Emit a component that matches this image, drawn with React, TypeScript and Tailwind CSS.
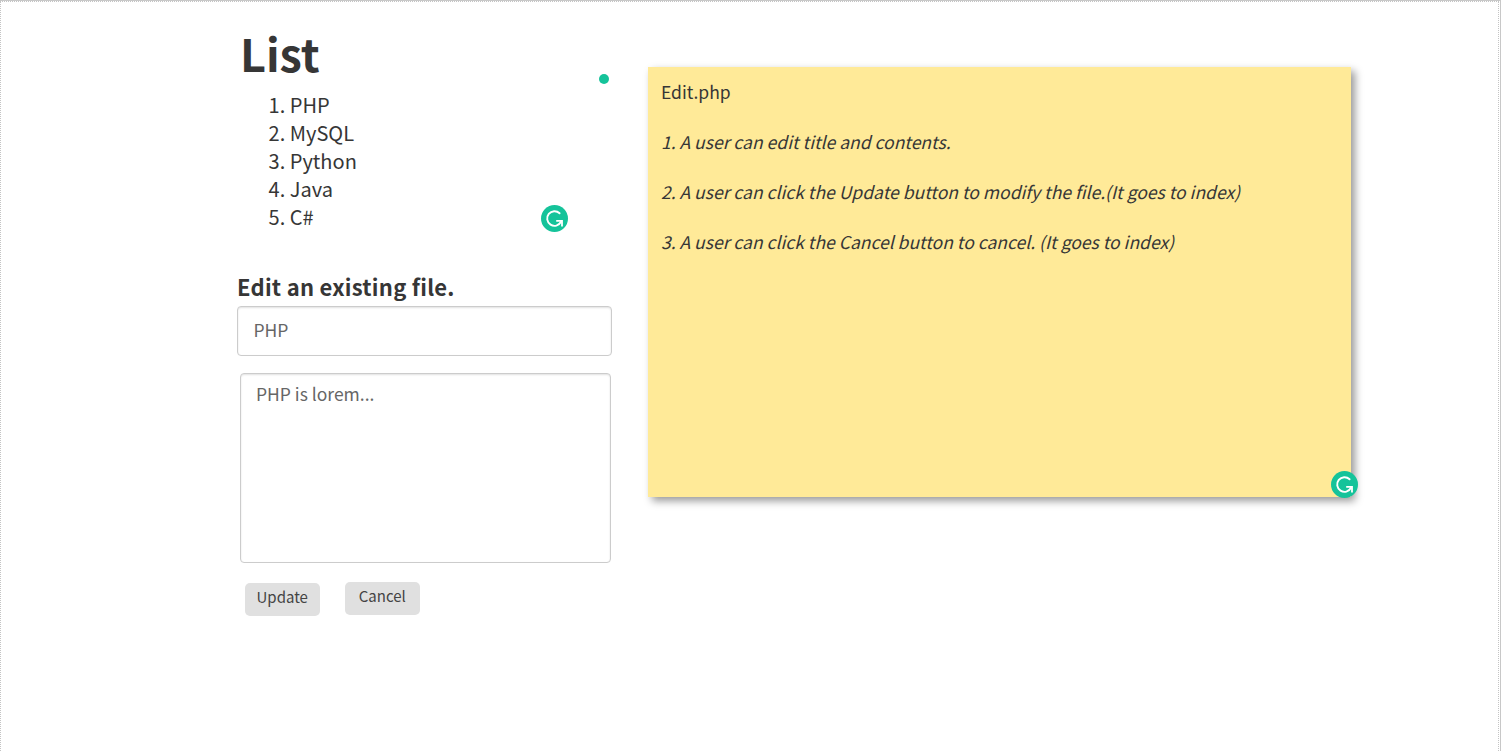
const items = ["PHP", "MySQL", "Python", "Java", "C#"];

const notes = [
  "1. A user can edit title and contents.",
  "2. A user can click the Update button to modify the file.(It goes to index)",
  "3. A user can click the Cancel button to cancel. (It goes to index)",
];

function Badge({ className }: { className: string }) {
  return (
    <svg className={className} viewBox="0 0 27 27" fill="none" aria-hidden="true">
      <circle cx="13.5" cy="13.5" r="13.5" fill="#15c39a" />
      <path d="M18.6 8.3A7.3 7.3 0 1 0 20 16.8" stroke="#fff" strokeWidth="1.9" strokeLinecap="round" />
      <path d="M15.2 15.9H21V21.4" stroke="#fff" strokeWidth="1.8" />
    </svg>
  );
}

export default function App() {
  return (
    <div className="relative h-[751px] w-[1501px] overflow-hidden bg-white font-['Noto_Sans_CJK_SC','Noto_Sans',sans-serif] text-[#363636]">
      <div className="pointer-events-none absolute inset-x-0 top-0 h-px bg-[#c8c8c8]" />
      <div className="pointer-events-none absolute inset-x-0 top-px border-t border-dotted border-[#c4c4c4]" />
      <div className="pointer-events-none absolute inset-y-0 left-0 border-l border-dotted border-[#c4c4c4]" />
      <div className="pointer-events-none absolute inset-y-0 right-[2px] border-r border-dotted border-[#c4c4c4]" />
      <div className="pointer-events-none absolute inset-y-0 right-0 w-px bg-[#c8c8c8]" />
      <div className="flex items-start pl-[237px]">
        <main className="relative w-[375px] pt-[26px]">
          <h1 className="pl-[3px] text-[45px] leading-[54px] font-bold tracking-[-0.1px]">List</h1>
          <ol className="mt-[11px] pl-[31.6px] text-[20px] leading-7">
            {items.map((item, index) => (
              <li key={item} className="whitespace-nowrap">{index + 1}. {item}</li>
            ))}
          </ol>
          <span className="absolute top-[74px] left-[361.5px] size-[10px] rounded-full bg-[#15c39a]" />
          <Badge className="absolute top-[204.5px] left-[304px] size-[27px]" />
          <h2 className="mt-10 text-[22px] leading-[30px] font-bold tracking-[0.25px] whitespace-nowrap">Edit an existing file.</h2>
          <div className="mt-[5px] flex h-[50px] w-[375px] items-start rounded-[4px] border border-[#ccc] pt-[11px] pl-[15.5px] text-[17.5px] leading-6 text-[#666] shadow-[inset_0_1px_2px_rgba(0,0,0,0.12)]">PHP</div>
          <div className="mt-[17px] ml-[3px] h-[190px] w-[371px] rounded-[4px] border border-[#ccc] pt-2 pl-[15px] text-[17.5px] leading-6 text-[#666] shadow-[inset_0_1px_2px_rgba(0,0,0,0.12)]">PHP is lorem...</div>
          <div className="mt-[19px] ml-2 flex items-start gap-[25px] text-[15px] text-[#444]">
            <button className="mt-px h-[33px] w-[75px] rounded-[5px] bg-[#e0e0e0] pr-[0.5px] pb-[5px] leading-7">Update</button>
            <button className="h-[33px] w-[75px] rounded-[5px] bg-[#e0e0e0] pr-[0.5px] pb-[5px] leading-7">Cancel</button>
          </div>
        </main>
        <aside className="relative mt-[67px] ml-9 h-[430px] w-[703px] bg-[#ffea98] pt-[12px] pl-[13px] text-[17.5px] leading-[25px] shadow-[4px_4px_8px_rgba(0,0,0,0.4)]">
          <p>Edit.php</p>
          {notes.map((note) => (
            <p key={note} className="mt-[25px] tracking-[0.01px] whitespace-nowrap italic">{note}</p>
          ))}
          <Badge className="absolute top-[403.5px] left-[683px] size-[27px]" />
        </aside>
      </div>
    </div>
  );
}
